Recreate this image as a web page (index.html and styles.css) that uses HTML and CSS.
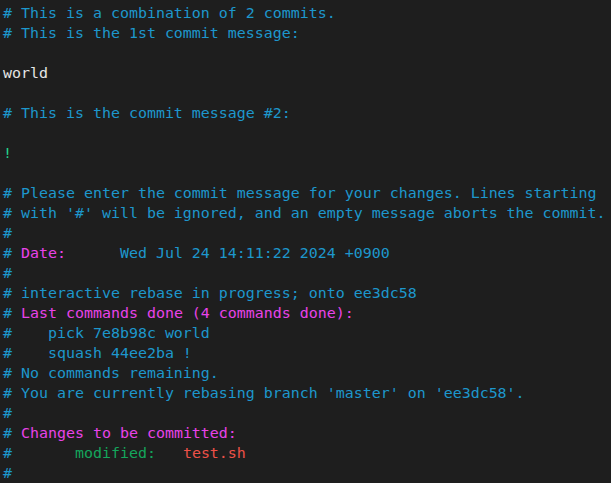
FILE: index.html
```html
<!DOCTYPE html>
<html lang="en">
<head>
<meta charset="utf-8">
<title>COMMIT_EDITMSG</title>
<link rel="stylesheet" href="styles.css">
</head>
<body>
<pre class="editor"><span class="c"># This is a combination of 2 commits.</span>
<span class="c"># This is the 1st commit message:</span>

<span class="w">world</span>

<span class="c"># This is the commit message #2:</span>

<span class="g">!</span>

<span class="c"># Please enter the commit message for your changes. Lines starting</span>
<span class="c"># with '#' will be ignored, and an empty message aborts the commit.</span>
<span class="c">#</span>
<span class="c"># </span><span class="m">Date:</span><span class="c">      Wed Jul 24 14:11:22 2024 +0900</span>
<span class="c">#</span>
<span class="c"># interactive rebase in progress; onto ee3dc58</span>
<span class="c"># </span><span class="m">Last commands done (4 commands done):</span>
<span class="c">#    pick 7e8b98c world</span>
<span class="c">#    squash 44ee2ba !</span>
<span class="c"># No commands remaining.</span>
<span class="c"># You are currently rebasing branch 'master' on 'ee3dc58'.</span>
<span class="c">#</span>
<span class="c"># </span><span class="m">Changes to be committed:</span>
<span class="c">#</span>       <span class="gd">modified:</span>   <span class="r">test.sh</span>
<span class="c">#</span>
</pre>
</body>
</html>
```
FILE: styles.css
```css
html, body {
  margin: 0;
  padding: 0;
  background: #1e1e1e;
  height: 100%;
  overflow: hidden;
}
.editor {
  margin: 0;
  padding: 3px 0 0 3px;
  font-family: "DejaVu Sans Mono", "Liberation Mono", monospace;
  font-size: 14.95px;
  line-height: 20px;
  color: #d4d4d4;
  white-space: pre;
}
.c { color: #1d97cc; }
.w { color: #e6e6e6; }
.g { color: #23d18b; }
.m { color: #e843e8; }
.gd { color: #14a65c; }
.r { color: #ee5148; }
```
